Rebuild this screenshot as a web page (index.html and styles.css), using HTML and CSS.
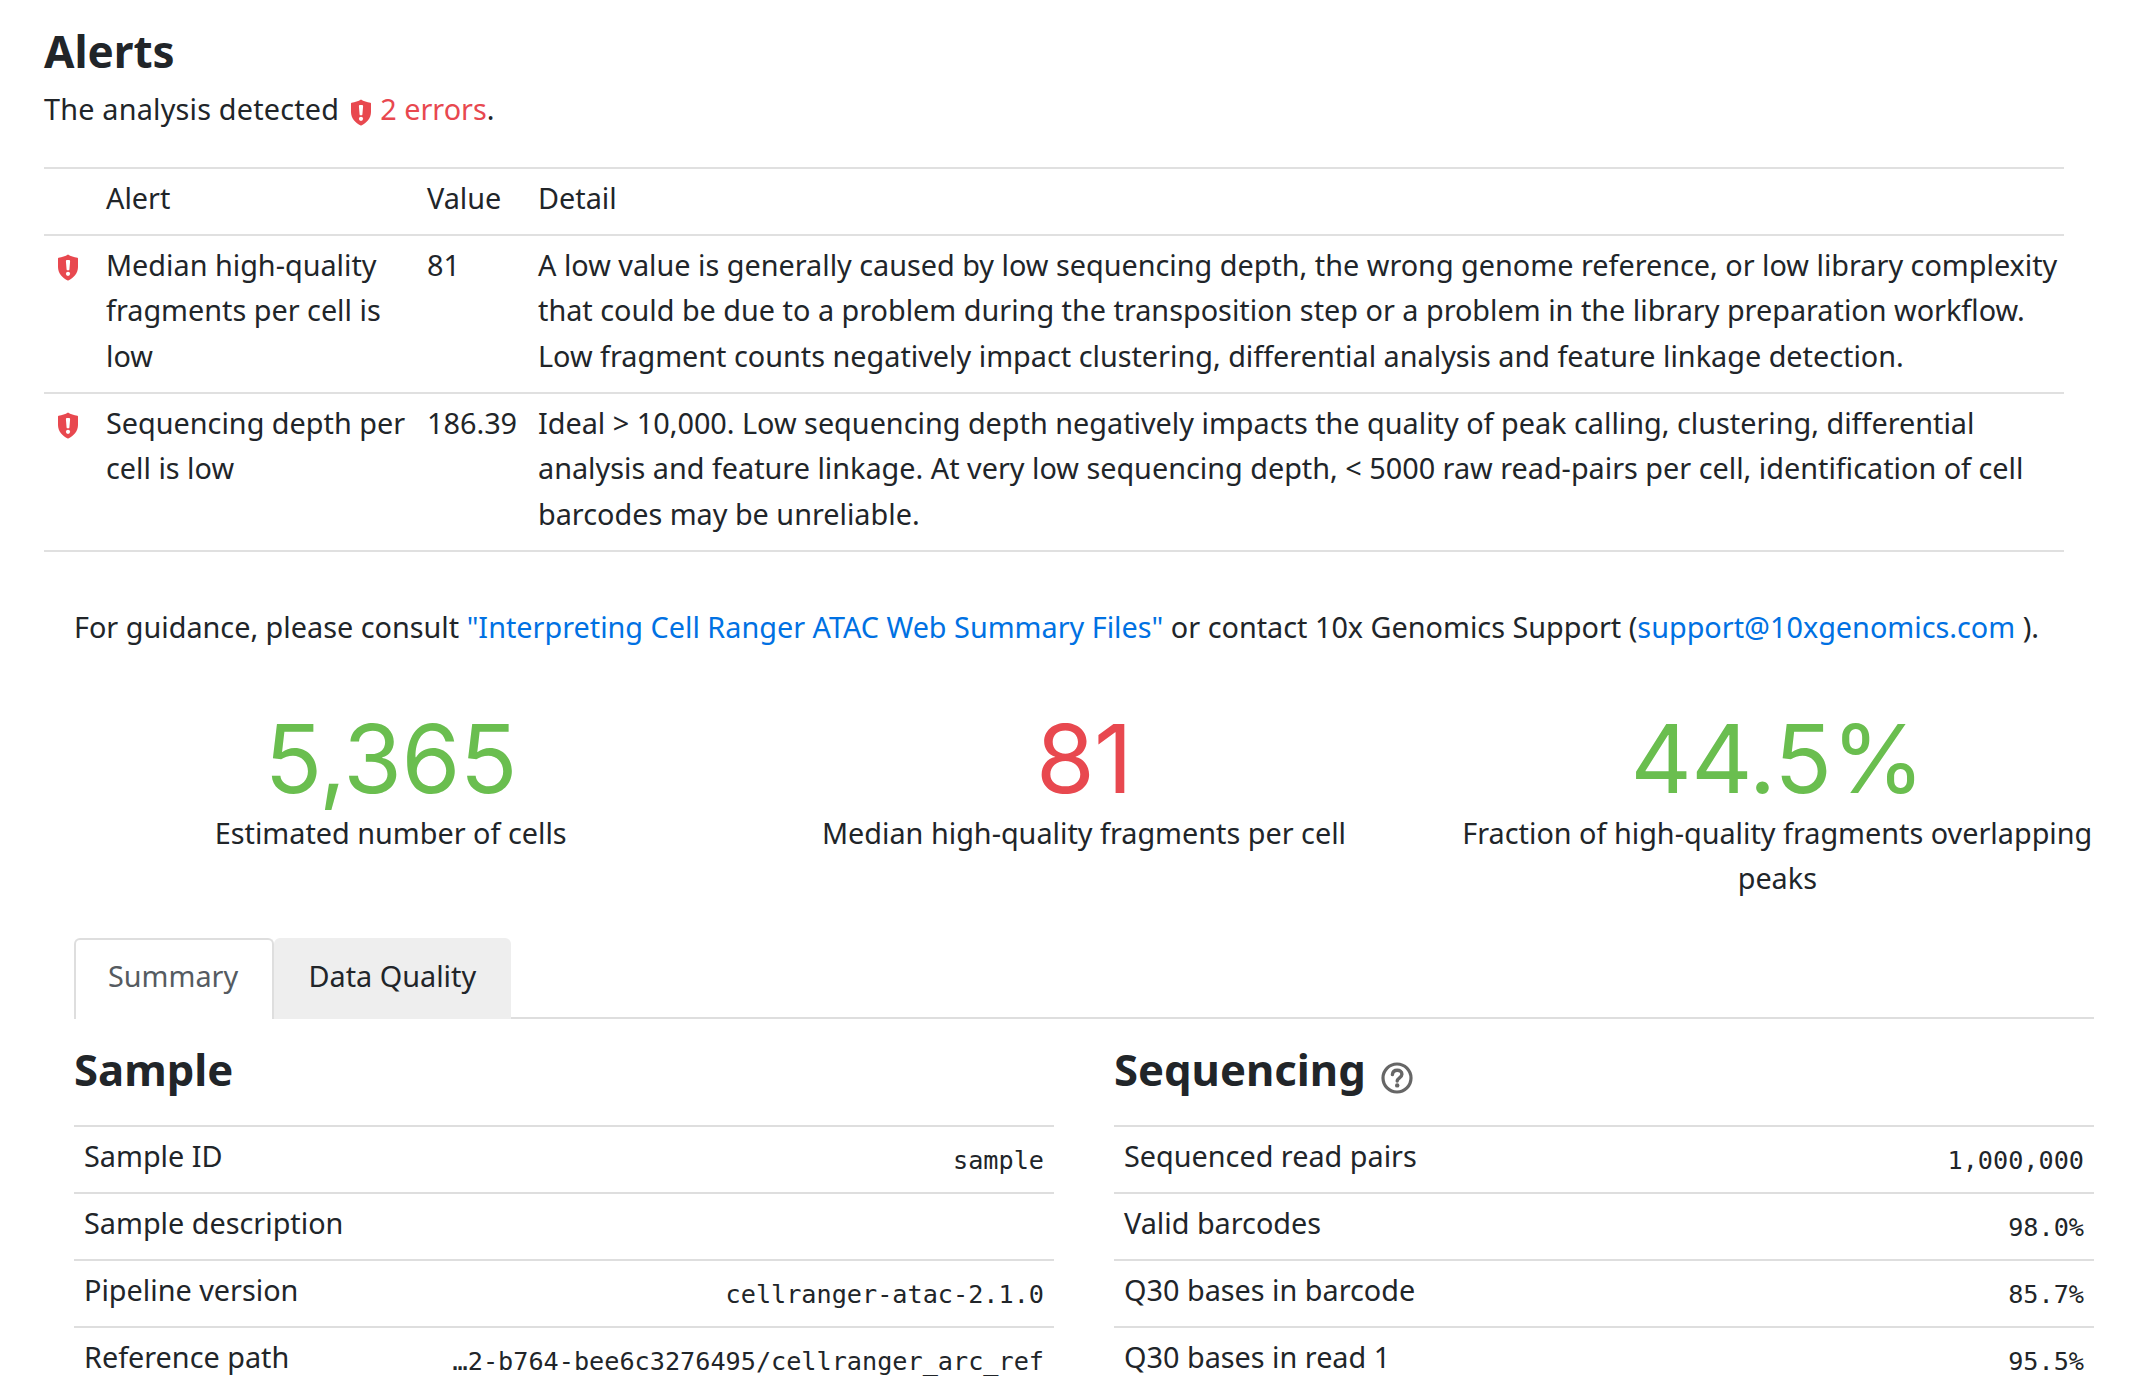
FILE: index.html
```html
<!DOCTYPE html>
<html lang="en">
<head>
<meta charset="utf-8">
<title>Web Summary</title>
<link rel="stylesheet" href="styles.css">
</head>
<body>
<svg class="defs" width="0" height="0" aria-hidden="true"><defs>
<symbol id="shield" viewBox="0 0 20 27"><path fill="currentColor" d="M10 0.5C7.4 2.2 4 3.4 0.6 3.7C0.3 3.7 0 4 0 4.4V13C0 19.4 4.6 24 9.7 26.4C9.9 26.5 10.1 26.5 10.3 26.4C15.4 24 20 19.4 20 13V4.4C20 4 19.7 3.7 19.4 3.7C16 3.4 12.6 2.2 10 0.5Z"/><path fill="#fff" d="M7.900 7.200C7.900 6.500 8.400 6 9.100 6H10.900C11.600 6 12.100 6.500 12.100 7.200L11.400 15.400C11.350 16 10.900 16.300 10.400 16.300H9.600C9.100 16.300 8.650 16 8.600 15.400Z"/><circle cx="10" cy="19.800" r="2.100" fill="#fff"/></symbol>
</defs></svg>
<main class="page">
  <section class="alerts">
    <h1 class="alerts-title">Alerts</h1>
    <p class="alerts-lead"><span class="lead-text">The analysis detected</span> <svg class="shield shield-inline"><use href="#shield"/></svg> <span class="err">2 errors</span>.</p>
    <table class="alert-table">
      <thead>
        <tr><th class="c-icon"></th><th class="c-alert">Alert</th><th class="c-value">Value</th><th>Detail</th></tr>
      </thead>
      <tbody>
        <tr>
          <td class="c-icon"><svg class="shield"><use href="#shield"/></svg></td>
          <td>Median high-quality fragments per cell is low</td>
          <td>81</td>
          <td class="c-detail">A low value is generally caused by low sequencing depth, the wrong genome reference, or low library complexity that could be due to a problem during the transposition step or a problem in the library preparation workflow. Low fragment counts negatively impact clustering, differential analysis and feature linkage detection.</td>
        </tr>
        <tr>
          <td class="c-icon"><svg class="shield"><use href="#shield"/></svg></td>
          <td>Sequencing depth per cell is low</td>
          <td>186.39</td>
          <td class="c-detail">Ideal &gt; 10,000. Low sequencing depth negatively impacts the quality of peak calling, clustering, differential analysis and feature linkage. At very low sequencing depth, &lt; 5000 raw read-pairs per cell, identification of cell barcodes may be unreliable.</td>
        </tr>
      </tbody>
    </table>
  </section>
  <p class="guidance">For guidance, please consult <a href="#">"Interpreting Cell Ranger ATAC Web Summary Files"</a> or contact 10x Genomics Support (<a href="#">support@10xgenomics.com</a> ).</p>
  <section class="metrics">
    <div class="metric"><div class="metric-value ok">5,365</div><div class="metric-label">Estimated number of cells</div></div>
    <div class="metric"><div class="metric-value bad">81</div><div class="metric-label">Median high-quality fragments per cell</div></div>
    <div class="metric"><div class="metric-value ok">44.5%</div><div class="metric-label">Fraction of high-quality fragments overlapping peaks</div></div>
  </section>
  <nav class="tabs">
    <a class="tab tab-active" href="#">Summary</a>
    <a class="tab" href="#">Data Quality</a>
  </nav>
  <section class="panels">
    <div class="panel">
      <h2 class="panel-title">Sample</h2>
      <div class="kv"><span>Sample ID</span><code>sample</code></div>
      <div class="kv"><span>Sample description</span><code></code></div>
      <div class="kv"><span>Pipeline version</span><code>cellranger-atac-2.1.0</code></div>
      <div class="kv"><span>Reference path</span><code>…2-b764-bee6c3276495/cellranger_arc_ref</code></div>
    </div>
    <div class="panel">
      <h2 class="panel-title">Sequencing <svg class="help" viewBox="0 0 32 32"><circle cx="16" cy="16" r="14" fill="none" stroke="currentColor" stroke-width="3.2"/><path d="M11.400 12.600c.3-2.700 2.300-4.300 4.800-4.300 2.700 0 4.700 1.600 4.700 4 0 3.500-4.700 3.500-4.700 6.800" fill="none" stroke="currentColor" stroke-width="3.400" stroke-linecap="round"/><circle cx="16.200" cy="23.400" r="2.200" fill="currentColor"/></svg></h2>
      <div class="kv"><span>Sequenced read pairs</span><code>1,000,000</code></div>
      <div class="kv"><span>Valid barcodes</span><code>98.0%</code></div>
      <div class="kv"><span>Q30 bases in barcode</span><code>85.7%</code></div>
      <div class="kv"><span>Q30 bases in read 1</span><code>95.5%</code></div>
    </div>
  </section>
</main>
</body>
</html>
```
FILE: styles.css
```css
* { box-sizing: border-box; }
html, body { margin: 0; padding: 0; background: #fff; }
body {
  font-family: "Noto Sans", "Lato", sans-serif;
  font-size: 28.8px;
  line-height: 45.6px;
  color: #212529;
  height: 1390px;
  overflow: hidden;
}
.defs { position: absolute; }
.page { padding: 20px 30px 0 44px; }
.alerts { width: 2020px; }
.alerts-title { margin: 0; font-size: 44px; line-height: 62px; font-weight: 700; }
.alerts-lead { margin: 4px 0 35px; }
.lead-text { letter-spacing: 0.2px; }
.shield { width: 20px; height: 27px; color: #e8484f; display: block; }
.shield-inline { display: inline-block; vertical-align: -6px; margin: 0 2px 0 4px; }
.err { color: #e8484f; }
.alert-table { width: 100%; border-collapse: collapse; table-layout: fixed; border-top: 2px solid #e0e0e0; }
.alert-table th, .alert-table td { padding: 6px 10px 13.400px; font-weight: 400; text-align: left; vertical-align: top; border-bottom: 2px solid #e0e0e0; }
.alert-table td.c-detail { padding-right: 0; }
.c-icon { width: 52px; }
.alert-table td.c-icon { padding: 18px 0 0 14px; }
.c-alert { width: 321px; }
.c-value { width: 111px; }
.guidance { margin: 52px 0 0 30px; white-space: nowrap; }
a { color: #0071e3; text-decoration: none; }
.metrics { display: grid; grid-template-columns: repeat(3, 1fr); margin-top: 60px; width: 2080px; }
.metric { padding: 0 30px; text-align: center; }
.metric-value { font-family: "Inter", "Noto Sans", sans-serif; font-size: 95px; line-height: 98px; font-weight: 400; letter-spacing: -0.6px; }
.ok { color: #6abe4f; }
.bad { color: #e8484f; }
.metric-label { margin-top: 2px; }
.tabs { display: flex; margin: 37px 0 0 30px; width: 2020px; border-bottom: 2px solid #dedede; height: 81px; }
.tab { display: block; padding: 15px 34.500px 0; height: 81px; background: #eeeeee; color: #212529; border-radius: 6px 6px 0 0; }
.tab-active { background: #fff; color: #555b61; border: 2px solid #dedede; border-bottom: 0; padding: 13px 32px 0; width: 200px; }
.panels { display: grid; grid-template-columns: 980px 980px; column-gap: 60px; margin-left: 30px; }
.panel-title { margin: 0; height: 106px; padding-top: 19px; font-size: 43.6px; line-height: 62px; font-weight: 700; }
.help { width: 32px; height: 32px; color: #666; vertical-align: -8px; margin-left: 4px; }
.kv { display: flex; justify-content: space-between; align-items: flex-start; height: 67px; padding: 6px 10px 0; border-top: 2px solid #dedede; }
.kv code { font-family: "DejaVu Sans Mono", "Liberation Mono", monospace; font-size: 25.2px; line-height: 45px; padding-top: 5px; color: #212529; }
```
